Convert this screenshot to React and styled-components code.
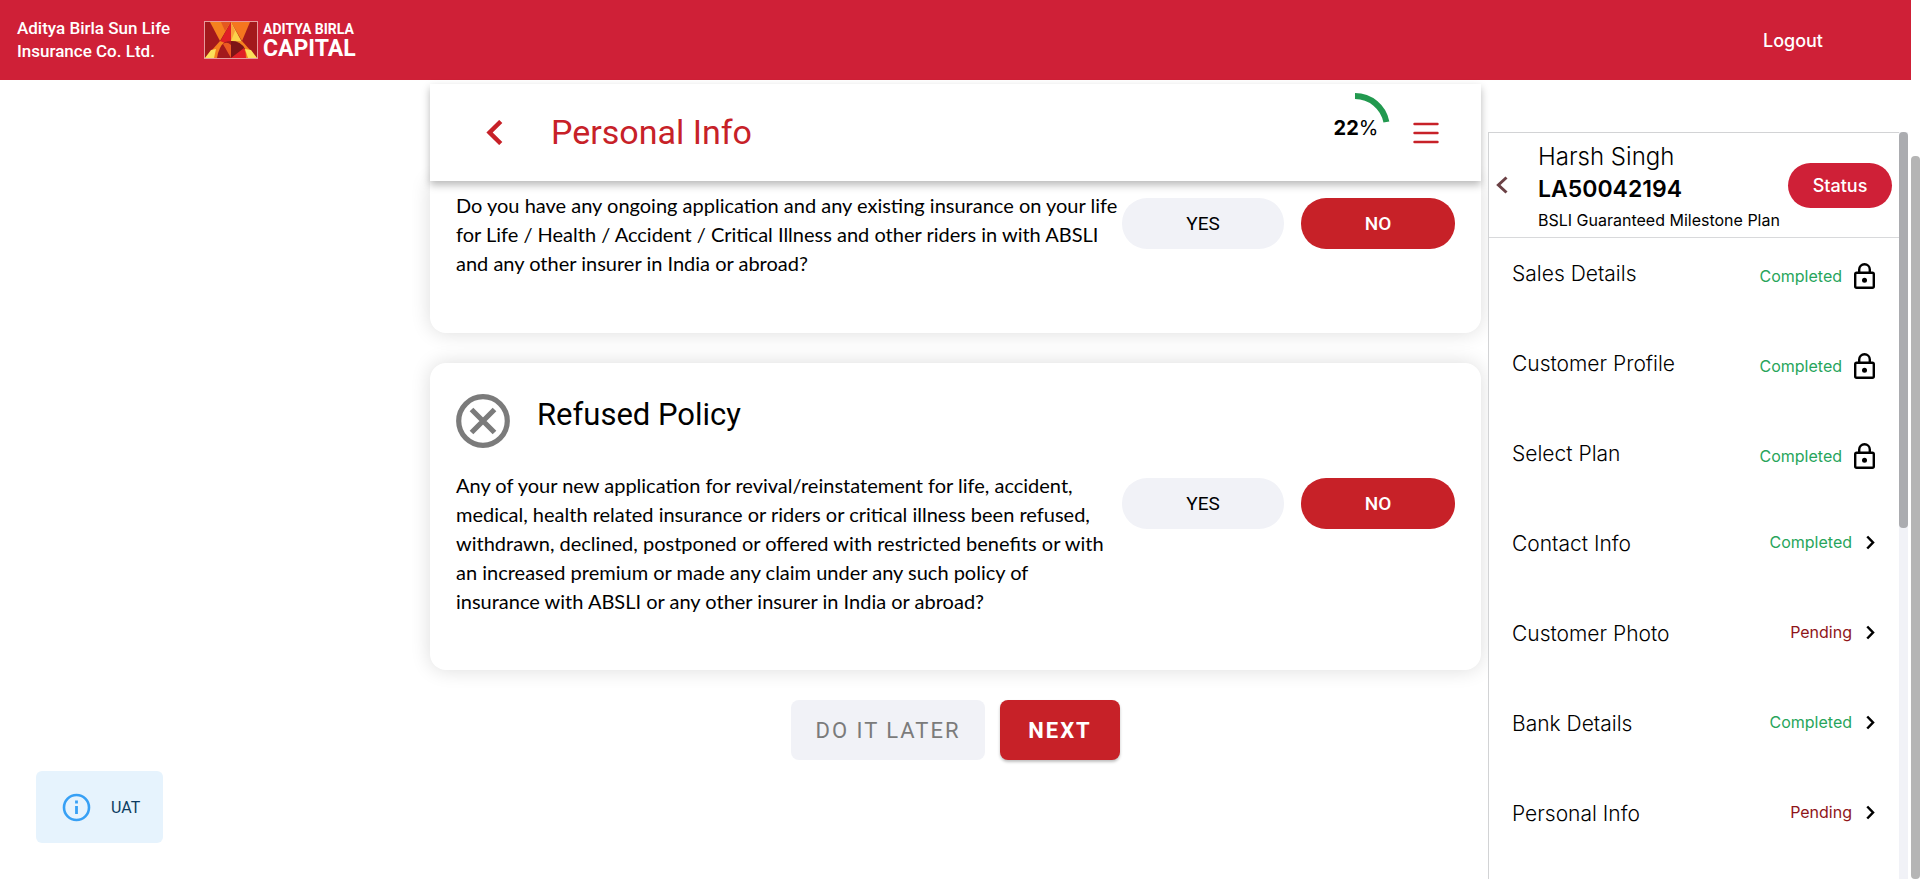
import React from "react";
import styled, { createGlobalStyle } from "styled-components";

const din = `Roboto, "Liberation Sans", sans-serif`;
const sans = `Inter, "Liberation Sans", sans-serif`;

const GlobalStyle = createGlobalStyle`
  *, *::before, *::after { box-sizing: border-box; }
  body { margin: 0; background: #fff; color: #000; font-family: ${din}; overflow: hidden; }
  h1, h2, p, ul { margin: 0; padding: 0; font-weight: 400; }
  ul { list-style: none; }
  button { border: 0; padding: 0; background: none; font: inherit; color: inherit; cursor: pointer; }
  svg { display: block; flex: none; }
`;

const Shell = styled.div`display: flex; height: 100vh;`;
const Page = styled.div`flex: 1; min-width: 0; display: flex; flex-direction: column;`;
const PageScroll = styled.div`width: 9px; padding-top: 156px; display: flex;`;
const Thumb = styled.div`
  flex: 1; border-radius: 4px; background: ${(p) => p.$color}; height: ${(p) => p.$height};
`;

const TopBar = styled.header`
  height: 80px; flex: none; padding: 0 88px 0 17px; background: #cf2037; color: #fff;
  display: flex; align-items: center;
`;
const Company = styled.div`width: 187px; font-size: 17px; font-weight: 500; line-height: 23px; white-space: nowrap;`;
const Brand = styled.div`display: flex; align-items: center; gap: 5px;`;
const Wordmark = styled.div`
  display: flex; flex-direction: column; white-space: nowrap; font-weight: 700;
`;
const WordLine = styled.span`font-size: ${(p) => p.$size}px; line-height: ${(p) => p.$line}px;`;
const Logout = styled.a`
  margin-left: auto; padding-top: 2px; color: #fff; text-decoration: none; font: 500 18px/24px ${sans};
`;

const Body = styled.div`
  flex: 1; min-height: 0; display: grid; grid-template-columns: 45fr 110fr 45fr;
`;
const LeftRail = styled.aside`display: flex; align-items: flex-end; padding: 36px;`;
const Toast = styled.div`
  display: flex; align-items: center; gap: 20px; width: 127px; height: 72px; padding-left: 26px;
  border-radius: 6px; background: #e6f3fd; color: #0d3c61; font-size: 16px;
`;

const Main = styled.main`display: flex; flex-direction: column; padding-top: 4px; min-width: 0;`;
const TitleBar = styled.div`
  position: relative; height: 97px; flex: none; padding: 0 42px 0 56px; display: flex; align-items: center;
  background: #fff; box-shadow: 0 4px 8px rgba(0, 0, 0, 0.28);
`;
const Title = styled.h1`color: #c72128; font-size: 34px; line-height: 40px; margin-left: 48px; padding-bottom: 2px;`;
const Progress = styled.div`
  margin-left: auto; margin-right: 22px; display: grid; place-items: center; font: 400 20px/24px ${sans};
  > * { grid-area: 1 / 1; }
  > span { padding-bottom: 10px; }
`;
const Card = styled.section`
  flex: none; background: #fff; border-radius: ${(p) => (p.$joined ? "0 0 16px 16px" : "16px")};
  box-shadow: 0 0 20px rgba(0, 0, 0, 0.14);
  padding: ${(p) => (p.$joined ? "10px 26px 55px" : "31px 26px 54px")};
  & + & { margin-top: 30px; }
`;
const CardHead = styled.div`display: flex; gap: 27px; margin-bottom: 23px;`;
const CardTitle = styled.h2`font-size: 31px; line-height: 42px;`;
const Question = styled.fieldset`
  margin: 0; padding: 0; border: 0; min-width: 0; display: flex; justify-content: space-between;
`;
const QuestionText = styled.p`font-family: Lato, ${din}; font-size: 20px; line-height: 29px; white-space: nowrap;`;
const Choices = styled.div`display: flex; gap: 17px; padding-top: 7px;`;
const Choice = styled.button`
  width: ${(p) => (p.$active ? 154 : 162)}px; height: 51px; border-radius: 25px; font-size: 19px;
  background: ${(p) => (p.$active ? "#c72128" : "#f1f2f7")};
  color: ${(p) => (p.$active ? "#fff" : "#000")};
  font-weight: ${(p) => (p.$active ? 500 : 400)};
`;
const Actions = styled.div`display: flex; justify-content: center; gap: 15px; margin-top: 30px;`;
const Action = styled.button`
  height: 60px; border-radius: 8px; font-size: 22px; letter-spacing: 2px;
  width: ${(p) => (p.$primary ? 120 : 194)}px;
  font-weight: ${(p) => (p.$primary ? 700 : 400)};
  color: ${(p) => (p.$primary ? "#fff" : "#7b7b7b")};
  background: ${(p) => (p.$primary ? "#c72128" : "#f1f2f7")};
  box-shadow: ${(p) => (p.$primary ? "0 2px 3px rgba(0, 0, 0, 0.25)" : "none")};
`;

const Sidebar = styled.aside`
  position: relative; margin: 52px 3px 0 7px; display: flex; overflow: hidden; font-family: ${sans};
`;
const Panel = styled.div`
  flex: 1; min-width: 0; background: #fff; border-top: 1px solid #d2d3d5; border-left: 1px solid #d2d3d5;
`;
const PanelTrack = styled.div`width: 9px; background: #f1f2f7; display: flex; align-items: flex-start;`;
const PanelHead = styled.div`
  height: 105px; padding: 0 7px; border-bottom: 1px solid #d8d9db; display: flex; align-items: center;
`;
const Applicant = styled.div`margin-left: 30px; padding-top: 4px; white-space: nowrap;`;
const Name = styled.p`font-size: 24px; font-weight: 300; line-height: 33px;`;
const PolicyId = styled.p`font-size: 23px; font-weight: 600; line-height: 33px;`;
const PlanName = styled.p`font-size: 16px; line-height: 29px;`;
const StatusButton = styled.button`
  margin-left: auto; flex: none; width: 104px; height: 45px; border-radius: 23px;
  background: #cf2037; color: #fff; font-size: 18px; font-weight: 500;
`;
const Step = styled.li`
  height: 90px; padding: 19px 24px 0 23px; display: flex; justify-content: space-between; align-items: flex-start;
`;
const StepName = styled.span`font-size: 21px; font-weight: 300; line-height: 34px;`;
const StepState = styled.span`
  display: flex; align-items: center; gap: ${(p) => (p.$locked ? 12 : 14)}px;
  font-size: 16px; line-height: 30px; padding-top: ${(p) => (p.$locked ? 4 : 0)}px;
  color: ${(p) => (p.$done ? "#27a55b" : "#8f1519")};
`;

const Chevron = ({ w, h, stroke, color, flip }) => (
  <svg width={w} height={h} viewBox={`0 0 ${w} ${h}`} fill="none" stroke={color} strokeWidth={stroke}>
    <path d={flip ? `M${stroke / 2} 1.5 L${w - stroke * 0.8} ${h / 2} L${stroke / 2} ${h - 1.5}` : `M${w - stroke / 2} 1.5 L${stroke * 0.8} ${h / 2} L${w - stroke / 2} ${h - 1.5}`} />
  </svg>
);

const Lock = () => (
  <svg width="21" height="26" viewBox="0 0 21 26" fill="none" stroke="#000" strokeWidth="2.4">
    <rect x="1.2" y="9.7" width="18.6" height="15.1" rx="1.5" />
    <path d="M5.2 9.5V6.5a5.3 5.3 0 0 1 10.6 0v3" />
    <circle cx="10.5" cy="17.2" r="2.5" fill="#000" stroke="none" />
  </svg>
);

const Emblem = () => (
  <svg width="54" height="38" viewBox="0 0 54 38">
    <rect width="54" height="38" fill="#a3191c" />
    <path d="M6 1H27L16 20Z" fill="#f5811f" />
    <path d="M27 1H46L38 20Z" fill="#f5761f" />
    <path d="M17 1H27L21 10Z" fill="#e4581f" />
    <path d="M27 1L16 21L27 24Z" fill="#e01f26" />
    <path d="M27 1L38 21L27 20Z" fill="#fbd24a" />
    <path d="M27 1V20L31 10Z" fill="#f9a13a" />
    <path d="M16 20L1 37H14L21 22Z" fill="#f5811f" />
    <path d="M38 20L53 37H41L33 21Z" fill="#f5811f" />
    <path d="M7 29L1 37H10L12 28Z" fill="#fbe05a" />
    <path d="M47 29L53 37H44L41 28Z" fill="#fbe05a" />
    <path d="M27 37L13 37Q15 25 21 21Q24 20 27 20Z" fill="#a3191c" />
    <path d="M27 37L19 23Q23 20 27 24Z" fill="#ec5a22" />
    <path d="M27 37V20Q37 20 41 28Z" fill="#7d1416" />
    <path d="M27 37L40 27Q42 31 42 37Z" fill="#e01f26" />
    <rect x=".5" y=".5" width="53" height="37" fill="none" stroke="#e79a9c" />
  </svg>
);

const steps = [
  ["Sales Details", true, true],
  ["Customer Profile", true, true],
  ["Select Plan", true, true],
  ["Contact Info", true, false],
  ["Customer Photo", false, false],
  ["Bank Details", true, false],
  ["Personal Info", false, false],
];

const YesNo = () => (
  <Choices>
    <Choice type="button" aria-pressed="false">YES</Choice>
    <Choice type="button" aria-pressed="true" $active>NO</Choice>
  </Choices>
);

export default function App() {
  return (
    <Shell>
      <GlobalStyle />
      <Page>
        <TopBar>
          <Company>Aditya Birla Sun Life<br />Insurance Co. Ltd.</Company>
          <Brand>
            <Emblem />
            <Wordmark>
              <WordLine $size={14} $line={16}>ADITYA BIRLA</WordLine>
              <WordLine $size={23} $line={23}>CAPITAL</WordLine>
            </Wordmark>
          </Brand>
          <Logout href="#logout">Logout</Logout>
        </TopBar>
        <Body>
          <LeftRail>
            <Toast role="status">
              <svg width="29" height="29" viewBox="0 0 29 29" fill="none">
                <circle cx="14.5" cy="14.5" r="12.5" stroke="#37a0f5" strokeWidth="2.6" />
                <path d="M13.1 13h2.8v8h-2.8zM13.1 7.6h2.8v2.8h-2.8z" fill="#37a0f5" />
              </svg>
              UAT
            </Toast>
          </LeftRail>
          <Main>
            <TitleBar>
              <button type="button" aria-label="Back"><Chevron w={17} h={25} stroke={4.5} color="#c72128" /></button>
              <Title>Personal Info</Title>
              <Progress>
                <svg width="70" height="82" viewBox="0 0 70 82">
                  <path d="M34 4A32 32 0 0 1 65.4 30" fill="none" stroke="#22994f" strokeWidth="6" />
                </svg>
                <span><b>22</b>%</span>
              </Progress>
              <button type="button" aria-label="Menu">
                <svg width="26" height="22" viewBox="0 0 26 22" stroke="#c72128" strokeWidth="2.4" strokeLinecap="round">
                  <path d="M1.5 2H24.5M1.5 11H24.5M1.5 20H24.5" />
                </svg>
              </button>
            </TitleBar>
            <Card $joined>
              <Question>
                <QuestionText>
                  Do you have any ongoing application and any existing insurance on your life<br />
                  for Life / Health / Accident / Critical Illness and other riders in with ABSLI<br />
                  and any other insurer in India or abroad?
                </QuestionText>
                <YesNo />
              </Question>
            </Card>
            <Card>
              <CardHead>
                <svg width="54" height="54" viewBox="0 0 54 54" fill="none" stroke="#7b7b7b">
                  <circle cx="27" cy="27" r="24.3" strokeWidth="5.2" />
                  <path d="M15.5 15.5L38.5 38.5M38.5 15.5L15.5 38.5" strokeWidth="5.2" />
                </svg>
                <CardTitle>Refused Policy</CardTitle>
              </CardHead>
              <Question>
                <QuestionText>
                  Any of your new application for revival/reinstatement for life, accident,<br />
                  medical, health related insurance or riders or critical illness been refused,<br />
                  withdrawn, declined, postponed or offered with restricted benefits or with<br />
                  an increased premium or made any claim under any such policy of<br />
                  insurance with ABSLI or any other insurer in India or abroad?
                </QuestionText>
                <YesNo />
              </Question>
            </Card>
            <Actions>
              <Action type="button">DO IT LATER</Action>
              <Action type="button" $primary>NEXT</Action>
            </Actions>
          </Main>
          <Sidebar>
            <Panel>
              <PanelHead>
                <button type="button" aria-label="Collapse"><Chevron w={12} h={18} stroke={3} color="#6b4145" /></button>
                <Applicant>
                  <Name>Harsh Singh</Name>
                  <PolicyId>LA50042194</PolicyId>
                  <PlanName>BSLI Guaranteed Milestone Plan</PlanName>
                </Applicant>
                <StatusButton type="button">Status</StatusButton>
              </PanelHead>
              <ul>
                {steps.map(([name, done, locked]) => (
                  <Step key={name}>
                    <StepName>{name}</StepName>
                    <StepState $done={done} $locked={locked}>
                      {done ? "Completed" : "Pending"}
                      {locked ? <Lock /> : <Chevron w={9} h={15} stroke={2.5} color="#000" flip />}
                    </StepState>
                  </Step>
                ))}
              </ul>
            </Panel>
            <PanelTrack><Thumb $color="#abacb0" $height="396px" /></PanelTrack>
          </Sidebar>
        </Body>
      </Page>
      <PageScroll><Thumb $color="#b5b5b5" /></PageScroll>
    </Shell>
  );
}
